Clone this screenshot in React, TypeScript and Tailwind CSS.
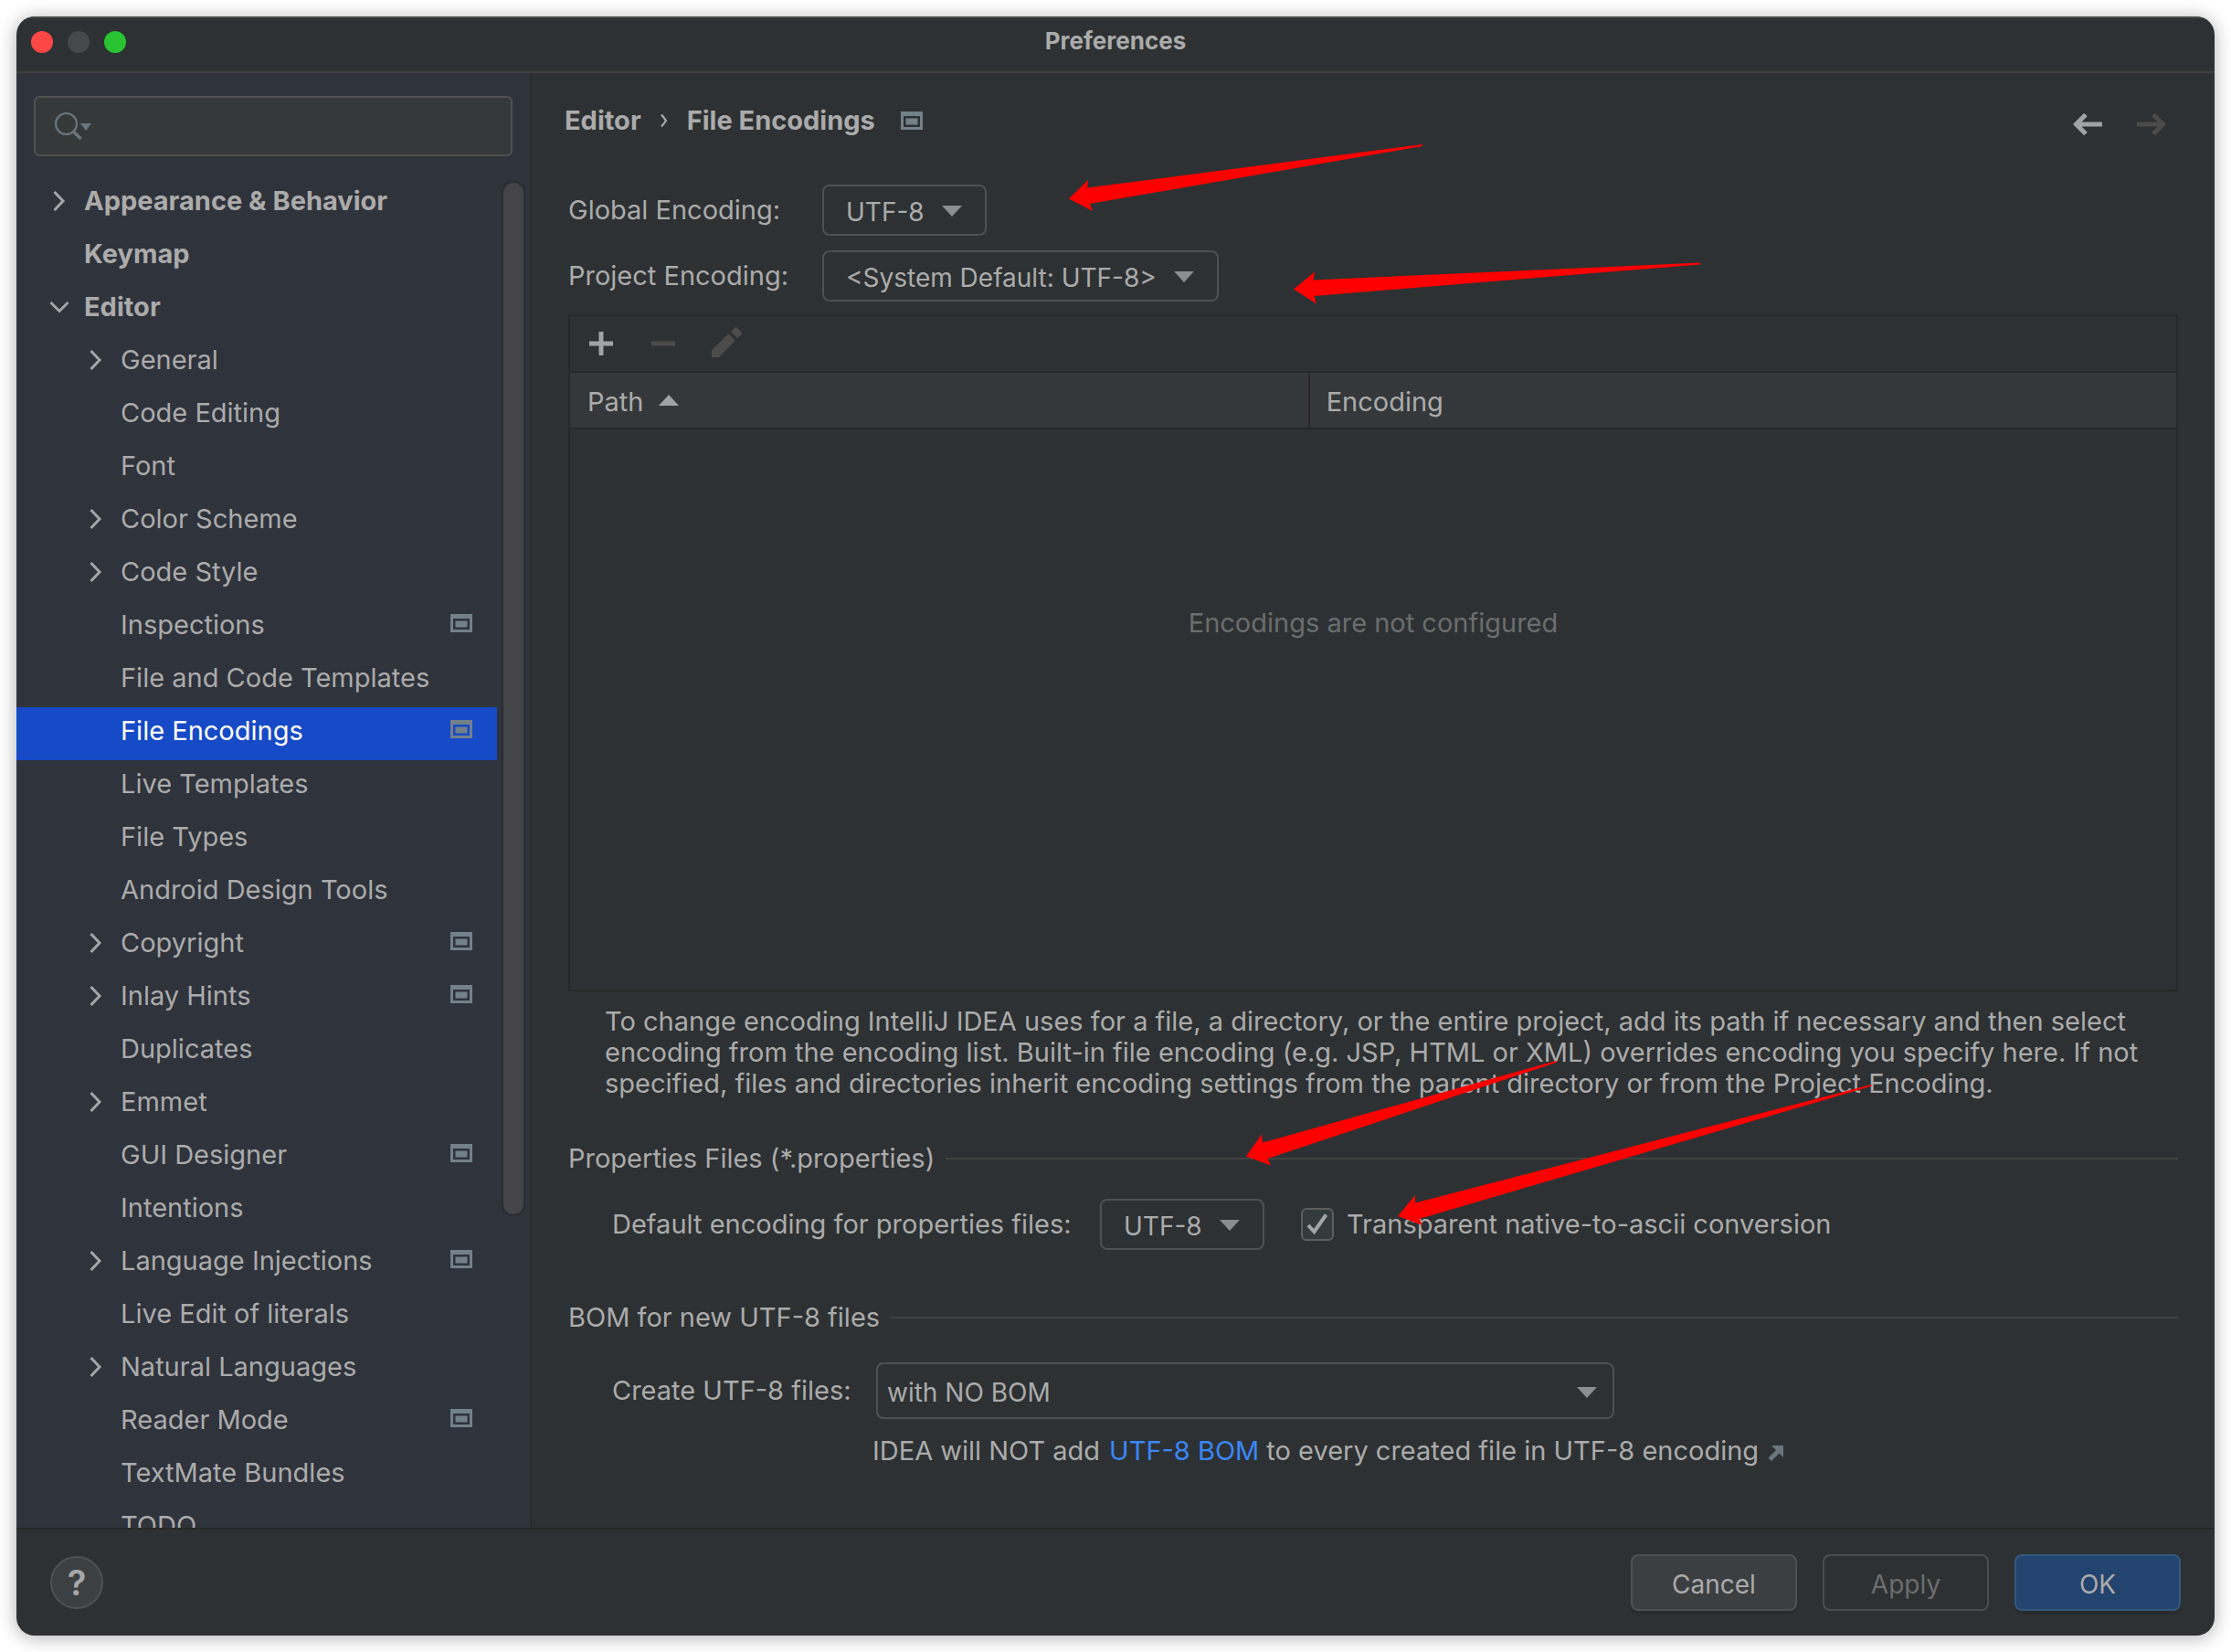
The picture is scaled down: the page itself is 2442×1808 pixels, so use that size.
import { useState } from "react";
import type { ReactNode } from "react";
import clsx from "clsx";

type TreeItem = {
  label: string;
  root?: boolean;
  arrow?: "right" | "down";
  project?: boolean;
};

const TREE: TreeItem[] = [
  { label: "Appearance & Behavior", root: true, arrow: "right" },
  { label: "Keymap", root: true },
  { label: "Editor", root: true, arrow: "down" },
  { label: "General", arrow: "right" },
  { label: "Code Editing" },
  { label: "Font" },
  { label: "Color Scheme", arrow: "right" },
  { label: "Code Style", arrow: "right" },
  { label: "Inspections", project: true },
  { label: "File and Code Templates" },
  { label: "File Encodings", project: true },
  { label: "Live Templates" },
  { label: "File Types" },
  { label: "Android Design Tools" },
  { label: "Copyright", arrow: "right", project: true },
  { label: "Inlay Hints", arrow: "right", project: true },
  { label: "Duplicates" },
  { label: "Emmet", arrow: "right" },
  { label: "GUI Designer", project: true },
  { label: "Intentions" },
  { label: "Language Injections", arrow: "right", project: true },
  { label: "Live Edit of literals" },
  { label: "Natural Languages", arrow: "right" },
  { label: "Reader Mode", project: true },
  { label: "TextMate Bundles" },
  { label: "TODO" },
];

function ProjectIcon({ className }: { className?: string }) {
  return (
    <svg viewBox="0 0 24 20" className={clsx("h-5 w-6 shrink-0", className)} aria-hidden="true">
      <path fillRule="evenodd" d="M0 0h24v20H0zM3 5v12h18V5z" fill="#728089" />
      <path d="M5.500 7.500h13v7h-13z" fill="#728089" />
    </svg>
  );
}

function Chevron({ dir }: { dir: "right" | "down" }) {
  return (
    <svg viewBox="0 0 24 24" className="size-6" fill="none" stroke="#a4a6a9" strokeWidth="3" aria-hidden="true">
      <path d={dir === "right" ? "M6.500 2l9.500 10-9.500 10" : "M2.500 7l9.500 9.500L21.500 7"} />
    </svg>
  );
}

function Triangle({ className, up }: { className?: string; up?: boolean }) {
  return (
    <svg viewBox="0 0 22 12" className={clsx("h-3 w-[22px]", className)} aria-hidden="true">
      <path d={up ? "M0 12h22L11 0z" : "M0 0h22L11 12z"} fill="currentColor" />
    </svg>
  );
}

function Dropdown({
  id,
  options,
  boxClass,
  selectClass,
  triangleClass,
}: {
  id: string;
  options: string[];
  boxClass: string;
  selectClass: string;
  triangleClass: string;
}) {
  return (
    <div className={clsx("relative shrink-0 text-[28px]", boxClass)}>
      <select
        id={id}
        className={clsx(
          "size-full appearance-none rounded-lg border-2 border-[#4e5051] bg-transparent pt-1 text-[#ababab] outline-none",
          selectClass,
        )}
      >
        {options.map((o) => (
          <option key={o}>{o}</option>
        ))}
      </select>
      <Triangle className={clsx("pointer-events-none absolute text-[#8b8d90]", triangleClass)} />
    </div>
  );
}

function Section({ title, className }: { title: string; className: string }) {
  return (
    <div className={clsx("flex items-center gap-3", className)}>
      <h2>{title}</h2>
      <div className="h-0.5 flex-1 bg-[#414242]" />
    </div>
  );
}

function PushButton({ children, className, disabled }: { children: ReactNode; className: string; disabled?: boolean }) {
  return (
    <button
      type="button"
      disabled={disabled}
      className={clsx("h-[62px] w-[182px] rounded-lg border-2 pt-1 text-[28px]", className)}
    >
      {children}
    </button>
  );
}

function Annotations() {
  return (
    <svg
      viewBox="0 0 2442 1808"
      className="pointer-events-none absolute top-0 left-0 h-[1808px] w-[2442px]"
      fill="#fe0000"
      aria-hidden="true"
    >
      <path d="M1170 217.500L1191 197L1190 205.500L1557 158V160L1193 223L1196 231Z" />
      <path d="M1416 316.500L1439 297.500L1437.500 306.500L1861 287.500V289.500L1438.500 324L1441 332.500Z" />
      <path d="M1364 1265.500L1381 1241.500L1382 1250.500L1703 1161L1704.500 1162.500L1387.500 1268L1391 1275.500Z" />
      <path d="M1530 1331L1549 1308L1549 1316.500L2048 1187L2049 1188.500L1553.500 1334L1557 1341Z" />
    </svg>
  );
}

export default function App() {
  const [selected, setSelected] = useState("File Encodings");
  const [ascii, setAscii] = useState(true);

  return (
    <div className="relative h-screen overflow-hidden bg-white p-[18px] font-['Inter',sans-serif] text-[29px] leading-[34px] text-[#ababab]">
      <div className="flex h-full flex-col overflow-hidden rounded-[20px] bg-[#2d3133] shadow-[0_2px_20px_rgba(0,0,0,0.32)]">
        <header className="relative flex h-[62px] shrink-0 items-center justify-center border-t-2 border-b-2 border-t-[#474a4b] border-b-[#43413f] pb-2">
          <div className="absolute top-3.5 left-4 flex gap-4">
            <button type="button" aria-label="Close" className="size-6 rounded-full bg-[#ff4746]" />
            <button type="button" aria-label="Minimize" className="size-6 rounded-full bg-[#464949]" />
            <button type="button" aria-label="Zoom" className="size-6 rounded-full bg-[#29c231]" />
          </div>
          <h1 className="text-[26px] font-bold">Preferences</h1>
        </header>

        <div className="flex min-h-0 flex-1">
          <aside className="flex w-[564px] shrink-0 flex-col border-r-2 border-[#292b2d] bg-[#2f333c] pt-[25px]">
            <div className="relative ml-[19px] h-[66px] w-[524px]">
              <input
                type="search"
                aria-label="Search settings"
                className="size-full rounded-md border-2 border-[#50514f] bg-[#363939] pr-4 pl-[68px] outline-none"
              />
              <svg
                viewBox="0 0 42 36"
                className="pointer-events-none absolute top-[18px] left-[22px] h-9 w-[42px]"
                fill="none"
                stroke="#67757e"
                aria-hidden="true"
              >
                <circle cx="13.500" cy="12.500" r="11.500" strokeWidth="2.200" />
                <path d="M21.500 21l8 8" strokeWidth="3.500" />
                <path d="M29 12h12l-6 8z" fill="#67757e" stroke="none" />
              </svg>
            </div>

            <div className="mt-[23px] flex min-h-0 flex-1">
              <nav aria-label="Settings" className="w-[526px] overflow-hidden">
                <ul>
                  {TREE.map((item) => {
                    const active = item.label === selected;
                    return (
                      <li key={item.label}>
                        <button
                          type="button"
                          onClick={() => setSelected(item.label)}
                          aria-current={active ? "page" : undefined}
                          className={clsx(
                            "flex h-[58px] w-full items-center pr-[27px] pb-1.5 text-left whitespace-nowrap",
                            item.root ? "pl-[35px] font-bold" : "pl-[75px]",
                            active && "bg-[#164ac6] text-white",
                          )}
                        >
                          <span className="w-[39px]">{item.arrow && <Chevron dir={item.arrow} />}</span>
                          <span className="flex-1">{item.label}</span>
                          {item.project && <ProjectIcon className="mb-1" />}
                        </button>
                      </li>
                    );
                  })}
                </ul>
              </nav>
              <div className="mt-1 ml-[5px] h-[calc(77%-5px)] w-[26px] rounded-full border-2 border-[#2a2c30] bg-[#434548]" />
            </div>
          </aside>

          <main className="min-w-0 flex-1 px-10 pt-6">
            <div className="-ml-1 flex h-14 items-center">
              <nav aria-label="Breadcrumb" className="flex flex-1 items-center font-bold">
                <a href="#editor">Editor</a>
                <svg viewBox="0 0 10 16" className="mx-5 h-4 w-2.5" fill="none" stroke="#ababab" strokeWidth="2.200" aria-hidden="true">
                  <path d="M2 1.500Q5 5 7 8Q5 11 2 14.500" />
                </svg>
                <a href="#file-encodings">File Encodings</a>
                <ProjectIcon className="ml-7" />
              </nav>
              <div className="mt-2 mr-[13px] flex gap-[38px]">
                <button type="button" aria-label="Back">
                  <svg viewBox="0 0 32 24" className="h-6 w-8" fill="none" stroke="#9fa4a6" strokeWidth="5" aria-hidden="true">
                    <path d="M32 12H4M14 1.500L3.500 12L14 22.500" />
                  </svg>
                </button>
                <button type="button" aria-label="Forward" disabled>
                  <svg viewBox="0 0 32 24" className="h-6 w-8" fill="none" stroke="#4b4b4b" strokeWidth="5" aria-hidden="true">
                    <path d="M0 12H28M18 1.500L28.500 12L18 22.500" />
                  </svg>
                </button>
              </div>
            </div>

            <div className="mt-[42px] grid grid-cols-[278px_1fr] items-center gap-y-4">
              <label htmlFor="global">Global Encoding:</label>
              <Dropdown
                id="global"
                options={["UTF-8", "UTF-16", "ISO-8859-1"]}
                boxClass="h-14 w-[180px]"
                selectClass="pl-6"
                triangleClass="top-[23px] right-[27px]"
              />
              <label htmlFor="project">Project Encoding:</label>
              <Dropdown
                id="project"
                options={["<System Default: UTF-8>", "UTF-8"]}
                boxClass="h-14 w-[434px]"
                selectClass="pl-6"
                triangleClass="top-[23px] right-[27px]"
              />
            </div>

            <div className="mt-3.5 border-2 border-[#282828]">
              <div className="flex h-[60px] items-center gap-[34px] pl-[18px]">
                <button type="button" aria-label="Add">
                  <svg viewBox="0 0 32 32" className="size-8" stroke="#a0a4a6" strokeWidth="5" aria-hidden="true">
                    <path d="M3 16h26M16 3v26" />
                  </svg>
                </button>
                <button type="button" aria-label="Remove" disabled>
                  <svg viewBox="0 0 32 32" className="size-8" stroke="#4c4c4b" strokeWidth="5" aria-hidden="true">
                    <path d="M5 16h26" />
                  </svg>
                </button>
                <button type="button" aria-label="Edit" disabled>
                  <svg viewBox="0 0 40 36" className="h-9 w-10" fill="#4c4c4b" aria-hidden="true">
                    <path d="M5 25.300L23.300 7.300L30.700 14.700L13 33H5ZM26 5L30 1Q31.500 -.500 33 1L37.300 5.300Q38.800 6.800 37.300 8.300L33 12.300Z" />
                  </svg>
                </button>
              </div>
              <table className="w-full table-fixed border-collapse">
                <thead>
                  <tr className="h-[62px] border-t-2 border-b-2 border-[#282828] bg-[#35383a]">
                    <th className="w-[46%] border-r-2 border-[#282828] pt-1 pl-[19px] text-left font-normal">
                      <button type="button" className="flex items-center gap-[17px]">
                        Path
                        <Triangle up className="mb-1 text-[#9fa3a5]" />
                      </button>
                    </th>
                    <th className="pt-1 pl-[18px] text-left font-normal">Encoding</th>
                  </tr>
                </thead>
                <tbody>
                  <tr>
                    <td colSpan={2} className="h-[614px] pb-[190px] text-center text-[#6b6d6e]">
                      Encodings are not configured
                    </td>
                  </tr>
                </tbody>
              </table>
            </div>

            <p className="mt-4 ml-10 whitespace-nowrap">
              To change encoding IntelliJ IDEA uses for a file, a directory, or the entire project, add its path if necessary and then select
              <br />
              encoding from the encoding list. Built-in file encoding (e.g. JSP, HTML or XML) overrides encoding you specify here. If not
              <br />
              specified, files and directories inherit encoding settings from the parent directory or from the Project Encoding.
            </p>

            <Section title="Properties Files (*.properties)" className="mt-12" />
            <div className="mt-[27px] ml-12 flex items-center">
              <label htmlFor="properties" className="w-[534px]">
                Default encoding for properties files:
              </label>
              <Dropdown
                id="properties"
                options={["UTF-8", "ISO-8859-1"]}
                boxClass="h-14 w-[180px]"
                selectClass="pl-6"
                triangleClass="top-[23px] right-[27px]"
              />
              <label className="ml-10 flex items-center gap-3.5">
                <span className="relative size-9">
                  <input
                    type="checkbox"
                    checked={ascii}
                    onChange={(e) => setAscii(e.target.checked)}
                    className="block size-full appearance-none rounded-md border-2 border-[#5d5f5f] bg-[#333b3d]"
                  />
                  {ascii && (
                    <svg viewBox="0 0 36 36" className="pointer-events-none absolute inset-0" fill="none" stroke="#a3a5a6" strokeWidth="4" aria-hidden="true">
                      <path d="M8 19l6.500 7L27.500 7.500" />
                    </svg>
                  )}
                </span>
                Transparent native-to-ascii conversion
              </label>
            </div>

            <Section title="BOM for new UTF-8 files" className="mt-[57px]" />
            <div className="mt-8 ml-12 flex items-center">
              <label htmlFor="bom" className="w-[289px]">
                Create UTF-8 files:
              </label>
              <Dropdown
                id="bom"
                options={["with NO BOM", "with BOM"]}
                boxClass="h-[62px] w-[808px]"
                selectClass="pl-2.5"
                triangleClass="top-[27px] right-[19px]"
              />
            </div>
            <p className="mt-[18px] flex items-center pl-[333px] whitespace-nowrap">
              IDEA will NOT add
              <a href="#bom" className="mr-2 ml-2.5 text-[#3a87f9]">
                UTF-8 BOM
              </a>
              to every created file in UTF-8 encoding
              <svg viewBox="0 0 18 18" className="mt-1 ml-2.5 size-[18px]" aria-hidden="true">
                <path d="M4 1h13v13l-4.500-4.500L4 18L.500 14.500L9 6z" fill="#69767e" />
              </svg>
            </p>
          </main>
        </div>

        <footer className="flex h-[118px] shrink-0 items-center gap-7 border-t-2 border-[#282828] px-[37px]">
          <button
            type="button"
            aria-label="Help"
            className="mr-auto size-[58px] rounded-full border-2 border-[#4e5152] bg-[#3d4042] text-[38px] font-semibold text-[#a4a8aa]"
          >
            ?
          </button>
          <PushButton className="border-[#4e5152] bg-[#3c3f41] shadow-[0_4px_0_#292b2c]">Cancel</PushButton>
          <PushButton disabled className="border-[#4b4d4e] text-[#6b6d6e]">
            Apply
          </PushButton>
          <PushButton className="border-[#33597c] bg-[#23446e] shadow-[0_4px_0_#292b2c]">OK</PushButton>
        </footer>
      </div>
      <Annotations />
    </div>
  );
}
